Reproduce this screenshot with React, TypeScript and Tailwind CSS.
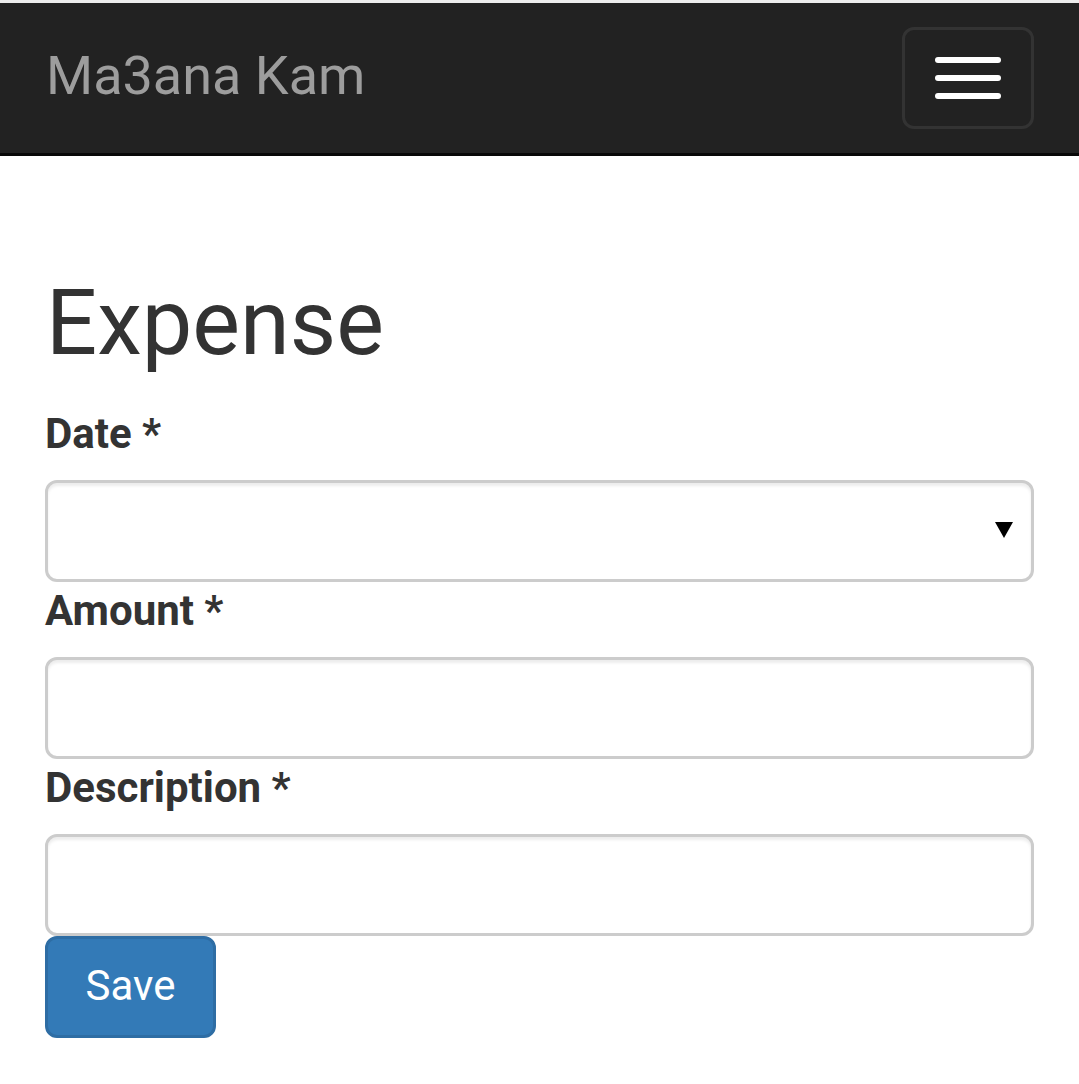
import React from "react";

export default function App() {
  return (
    <div className="min-h-[1084px] bg-white text-[#333] [font-family:Roboto,'Noto_Sans',sans-serif]">
      <div className="h-[3px] bg-[#ededed]" />
      <nav className="h-[153px] bg-[#222] border-b-[3px] border-[#080808] flex items-start justify-between">
        <div className="h-[150px] pt-[43px] pb-[47px] pr-[45px] pl-[46px] text-[54px] leading-[60px] text-[#9d9d9d]">
          Ma3ana Kam
        </div>
        <button className="mt-[24px] mr-[45px] w-[132px] h-[102px] rounded-[12px] border-[3px] border-[#333] flex flex-col items-center justify-center gap-[12px]">
          <span className="block w-[66px] h-[6px] rounded-[3px] bg-white" />
          <span className="block w-[66px] h-[6px] rounded-[3px] bg-white" />
          <span className="block w-[66px] h-[6px] rounded-[3px] bg-white" />
        </button>
      </nav>
      <div className="px-[45px] pt-[60px]">
        <h2 className="mt-[60px] mb-[33px] text-[90px] leading-[96px] font-normal pl-[1px]">Expense</h2>
        <form className="flex flex-col">
          <label className="text-[42px] leading-[57px] font-bold mb-[18px]">Date *</label>
          <div className="relative h-[102px] rounded-[12px] border-[3px] border-[#ccc] shadow-[inset_0_3px_3px_rgba(0,0,0,0.075)]">
            <svg className="absolute right-[18px] top-[39px]" width="18" height="16" viewBox="0 0 18 16">
              <polygon points="0,0 18,0 9,16" fill="#000" />
            </svg>
          </div>
          <label className="text-[42px] leading-[57px] font-bold mb-[18px]">Amount *</label>
          <div className="h-[102px] rounded-[12px] border-[3px] border-[#ccc] shadow-[inset_0_3px_3px_rgba(0,0,0,0.075)]" />
          <label className="text-[42px] leading-[57px] font-bold mb-[18px]">Description *</label>
          <div className="h-[102px] rounded-[12px] border-[3px] border-[#ccc] shadow-[inset_0_3px_3px_rgba(0,0,0,0.075)]" />
          <div>
            <button type="button" className="h-[102px] w-[171px] rounded-[12px] border-[3px] border-[#2e6da4] bg-[#337ab7] text-white text-[42px] leading-[57px] pb-[3px]">
              Save
            </button>
          </div>
        </form>
      </div>
    </div>
  );
}
